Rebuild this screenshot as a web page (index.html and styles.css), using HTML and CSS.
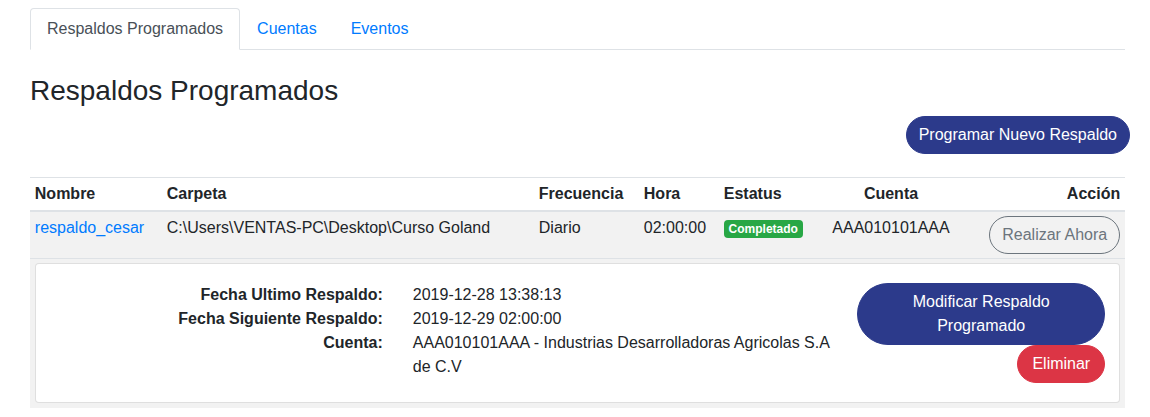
FILE: index.html
```html
<!DOCTYPE html>
<html lang="es">
<head>
<meta charset="utf-8">
<title>Respaldos Programados</title>
<link rel="stylesheet" href="styles.css">
</head>
<body>
<div class="page">
  <ul class="nav-tabs">
    <li><a class="nav-link active" href="#">Respaldos Programados</a></li>
    <li><a class="nav-link" href="#">Cuentas</a></li>
    <li><a class="nav-link" href="#">Eventos</a></li>
  </ul>

  <h3 class="title">Respaldos Programados</h3>

  <div class="toolbar">
    <button class="btn btn-navy">Programar Nuevo Respaldo</button>
  </div>

  <table class="table">
    <colgroup>
      <col class="c-nombre">
      <col class="c-carpeta">
      <col class="c-frec">
      <col class="c-hora">
      <col class="c-estatus">
      <col class="c-cuenta">
      <col class="c-accion">
    </colgroup>
    <thead>
      <tr>
        <th>Nombre</th>
        <th>Carpeta</th>
        <th>Frecuencia</th>
        <th>Hora</th>
        <th>Estatus</th>
        <th class="center">Cuenta</th>
        <th class="right">Acción</th>
      </tr>
    </thead>
    <tbody>
      <tr class="shaded">
        <td><a href="#" class="link">respaldo_cesar</a></td>
        <td>C:\Users\VENTAS-PC\Desktop\Curso Goland</td>
        <td>Diario</td>
        <td>02:00:00</td>
        <td><span class="badge">Completado</span></td>
        <td class="center">AAA010101AAA</td>
        <td class="right"><button class="btn btn-outline">Realizar Ahora</button></td>
      </tr>
      <tr class="shaded">
        <td colspan="7">
          <div class="card">
            <div class="card-body">
              <div class="labels">
                <div>Fecha Ultimo Respaldo:</div>
                <div>Fecha Siguiente Respaldo:</div>
                <div>Cuenta:</div>
              </div>
              <div class="values">
                <div>2019-12-28 13:38:13</div>
                <div>2019-12-29 02:00:00</div>
                <div>AAA010101AAA - Industrias Desarrolladoras Agricolas S.A de C.V</div>
              </div>
              <div class="actions">
                <button class="btn btn-navy btn-wide">Modificar Respaldo Programado</button>
                <button class="btn btn-red">Eliminar</button>
              </div>
            </div>
          </div>
        </td>
      </tr>
    </tbody>
  </table>
</div>
</body>
</html>
```

FILE: styles.css
```css
* { box-sizing: border-box; }

body {
  margin: 0;
  font-family: "Liberation Sans", Arial, sans-serif;
  font-size: 16px;
  line-height: 1.5;
  color: #212529;
  background: #fff;
}

.page {
  padding: 8px 25px 0 30px;
}

.nav-tabs {
  display: flex;
  list-style: none;
  margin: 0;
  padding: 0;
  border-bottom: 1px solid #dee2e6;
}

.nav-link {
  display: block;
  padding: 8px 16px;
  margin-bottom: -1px;
  border: 1px solid transparent;
  border-radius: 4px 4px 0 0;
  color: #007bff;
  text-decoration: none;
}

.nav-link.active {
  color: #495057;
  background: #fff;
  border-color: #dee2e6 #dee2e6 #fff;
}

.title {
  margin: 24px 0 8px;
  font-size: 28px;
  font-weight: 400;
  line-height: 1.2;
}

.toolbar {
  display: flex;
  justify-content: flex-end;
  margin-right: -5px;
  margin-bottom: 23px;
}

.btn {
  display: inline-block;
  font-family: inherit;
  font-size: 16px;
  line-height: 1.5;
  padding: 6px 12px;
  border: 1px solid transparent;
  border-radius: 999px;
  cursor: pointer;
  text-align: center;
}

.btn-navy {
  background: #2c3a8b;
  border-color: #2c3a8b;
  color: #fff;
}

.btn-red {
  background: #dc3545;
  border-color: #dc3545;
  color: #fff;
  padding: 6px 14px;
}

.btn-outline {
  background: transparent;
  border-color: #6c757d;
  color: #6c757d;
}

.btn-wide {
  width: 248px;
}

.table {
  width: 100%;
  border-collapse: collapse;
  table-layout: fixed;
}

.c-nombre { width: 132px; }
.c-carpeta { width: 372px; }
.c-frec { width: 105px; }
.c-hora { width: 80px; }
.c-estatus { width: 108px; }
.c-cuenta { width: 128px; }
.c-accion { width: 170px; }

.table th,
.table td {
  padding: 4.8px;
  vertical-align: top;
  border-top: 1px solid #dee2e6;
  text-align: left;
}

.table thead th {
  vertical-align: bottom;
  padding-top: 4px;
  padding-bottom: 4px;
  border-bottom: 2px solid #dee2e6;
  font-weight: 700;
}

.table tbody td {
  padding-top: 4px;
}

.table .center { text-align: center; }
.table .right { text-align: right; }

.shaded { background: #f2f2f2; }

.link {
  color: #007bff;
  text-decoration: none;
}

.badge {
  display: inline-block;
  padding: 3px 4.8px;
  font-size: 12px;
  font-weight: 700;
  line-height: 1;
  color: #fff;
  background: #28a745;
  border-radius: 4px;
  vertical-align: baseline;
}

.card {
  background: #fff;
  border: 1px solid rgba(0, 0, 0, 0.125);
  border-radius: 4px;
}

.card-body {
  display: flex;
  padding: 19px 14px 19px 20px;
}

.labels {
  width: 327px;
  flex: none;
  text-align: right;
  font-weight: 700;
}

.values {
  width: 417px;
  flex: none;
  margin-left: 30px;
}

.actions {
  flex: 1;
  display: flex;
  flex-direction: column;
  align-items: flex-end;
}
```
